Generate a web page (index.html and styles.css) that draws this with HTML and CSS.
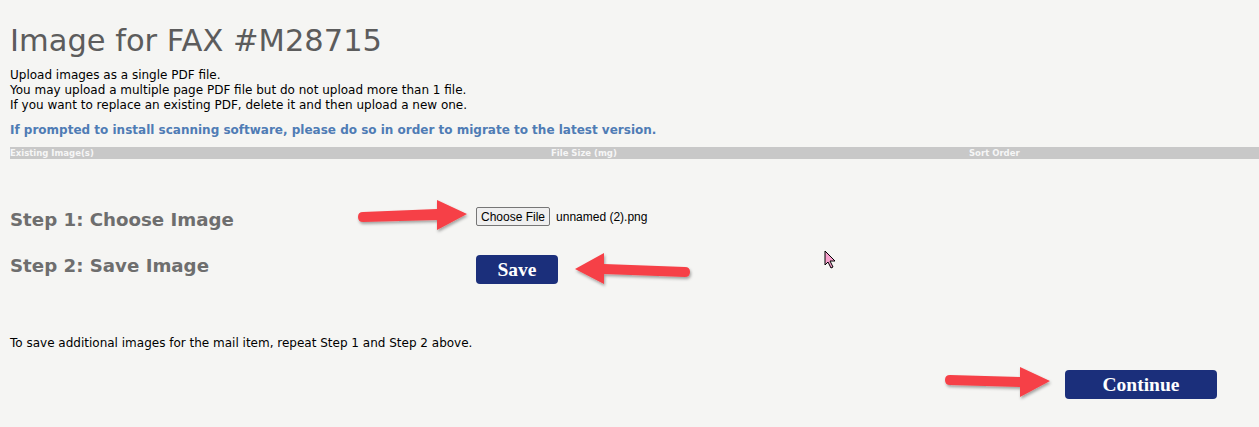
FILE: index.html
```html
<!DOCTYPE html>
<html lang="en">
<head>
    <meta charset="UTF-8">
    <title>Image for FAX #M28715</title>
    <link rel="stylesheet" href="styles.css">
</head>
<body>
    <div class="page">
        <h1>Image for FAX #M28715</h1>
        <p class="info">
            Upload images as a single PDF file.<br>
            You may upload a multiple page PDF file but do not upload more than 1 file.<br>
            If you want to replace an existing PDF, delete it and then upload a new one.
        </p>
        <p class="notice">If prompted to install scanning software, please do so in order to migrate to the latest version.</p>

        <div class="image-table">
            <span class="col-name">Existing Image(s)</span>
            <span class="col-size">File Size (mg)</span>
            <span class="col-sort">Sort Order</span>
        </div>

        <div class="steps">
            <div class="step">
                <div class="step-label">Step 1: Choose Image</div>
                <div class="step-control">
                    <button class="file-button">Choose File</button>
                    <span class="file-name">unnamed (2).png</span>
                </div>
            </div>
            <div class="step">
                <div class="step-label">Step 2: Save Image</div>
                <div class="step-control">
                    <button class="action-button save">Save</button>
                </div>
            </div>
        </div>

        <p class="repeat">To save additional images for the mail item, repeat Step 1 and Step 2 above.</p>

        <div class="actions">
            <button class="action-button continue">Continue</button>
        </div>
    </div>

    <!-- annotation overlays -->
    <svg class="annotations" width="1259" height="427" viewBox="0 0 1259 427">
        <defs>
            <filter id="shadow" x="-20%" y="-40%" width="140%" height="180%">
                <feDropShadow dx="1" dy="2" stdDeviation="1.5" flood-color="#000" flood-opacity="0.35"/>
            </filter>
        </defs>
        <g fill="#f64147" filter="url(#shadow)">
            <path d="M363 212 L437 209 L437 200 L467 214 L437 230 L437 220 L363 222 Q358 222 358 217 Q358 212 363 212 Z"/>
            <path d="M685 267 L604 264 L604 253 L575 269 L604 284 L604 274 L685 277 Q690 277 690 272 Q690 267 685 267 Z"/>
            <path d="M950 375 L1020 377 L1020 367 L1050 381 L1020 397 L1020 387 L950 385 Q945 385 945 380 Q945 375 950 375 Z"/>
        </g>
        <path class="cursor" d="M825 251 L825 265 L828 262 L831 268 L833 267 L830 261 L835 261 Z"/>
    </svg>
</body>
</html>
```

FILE: styles.css
```css
body {
    margin: 0;
    padding: 0;
    background-color: #f5f5f3;
    font-family: "DejaVu Sans", Verdana, sans-serif;
    color: #000;
}
.page {
    padding: 0 0 0 10px;
}
h1 {
    margin: 0;
    padding-top: 22px;
    font-size: 30.5px;
    font-weight: normal;
    color: #5c5c5c;
    line-height: 38px;
}
.info {
    margin: 8px 0 0 0;
    font-size: 12px;
    line-height: 15px;
}
.notice {
    margin: 9px 0 0 0;
    font-size: 12px;
    font-weight: bold;
    color: #4f7cb5;
    line-height: 16px;
}
.image-table {
    display: grid;
    grid-template-columns: 541px 418px 1fr;
    margin-top: 9px;
    background-color: #c8c8c8;
    color: #f6f6f6;
    font-size: 8.5px;
    font-weight: bold;
    line-height: 12px;
    height: 12px;
}
.steps {
    margin-top: 48px;
    display: flex;
    flex-direction: column;
    gap: 20px;
}
.step {
    display: flex;
    align-items: flex-start;
}
.step-label {
    width: 466px;
    font-size: 18.2px;
    font-weight: bold;
    color: #6e6e6e;
    line-height: 26px;
}
.step-control {
    display: flex;
    align-items: center;
    gap: 6px;
}
.file-button {
    font-family: "Liberation Sans", Arial, sans-serif;
    font-size: 12px;
    height: 19px;
    padding: 0 4px;
    background-color: #efefef;
    border: 1px solid #767676;
    border-radius: 2px;
    color: #000;
}
.file-name {
    font-family: "Liberation Sans", Arial, sans-serif;
    font-size: 12px;
}
.action-button {
    background-color: #1b2f7b;
    color: #fff;
    border: none;
    border-radius: 4px;
    font-family: "Liberation Serif", "Times New Roman", serif;
    font-weight: bold;
    font-size: 19.5px;
    height: 29px;
    padding: 0;
    cursor: pointer;
}
.action-button.save {
    width: 82px;
    margin-top: 2px;
}
.repeat {
    margin: 52px 0 0 0;
    font-size: 12px;
    line-height: 15px;
}
.actions {
    display: flex;
    justify-content: flex-end;
    padding-right: 42px;
    margin-top: 19px;
}
.action-button.continue {
    width: 152px;
}
.annotations {
    position: absolute;
    top: 0;
    left: 0;
    pointer-events: none;
}
.cursor {
    fill: #f7a1cc;
    stroke: #000;
    stroke-width: 1;
}
```
